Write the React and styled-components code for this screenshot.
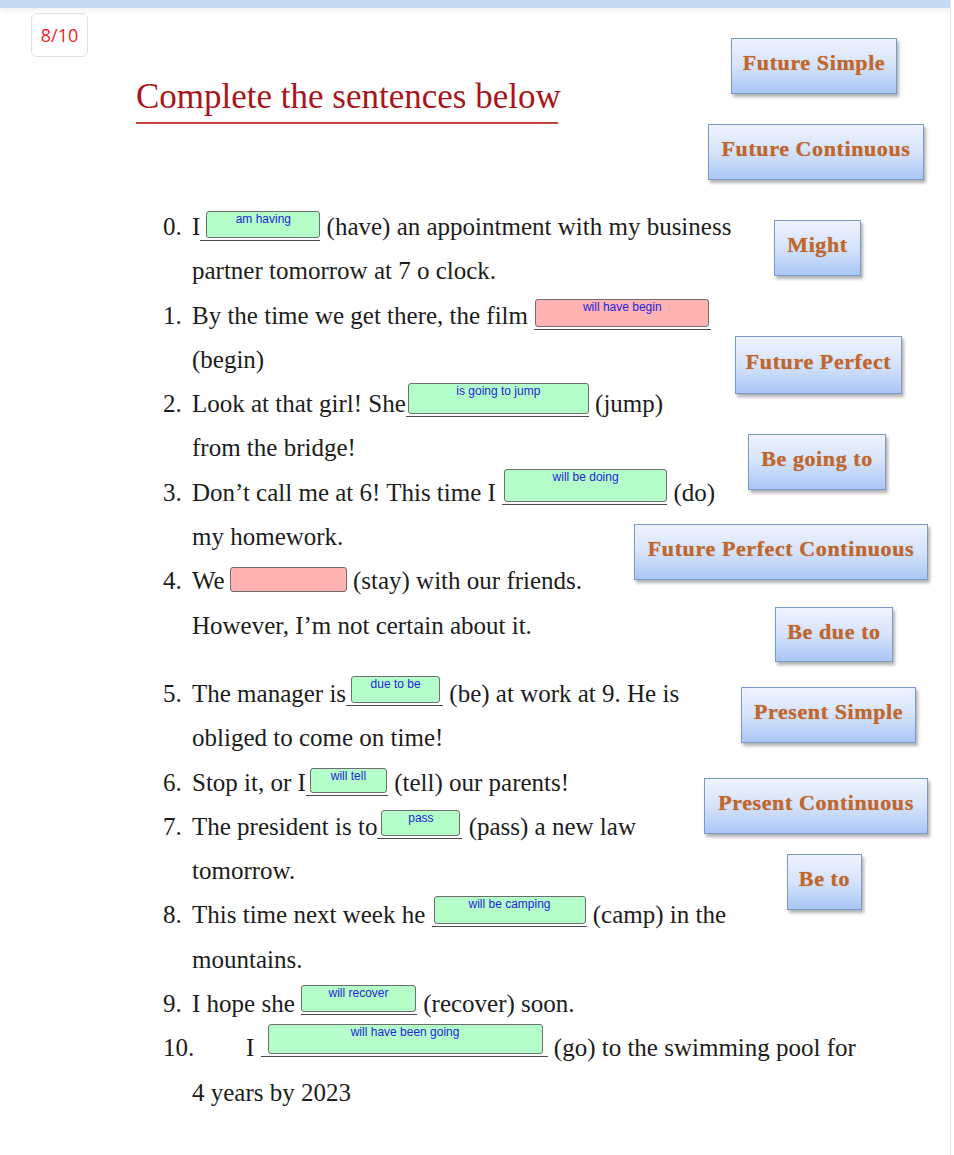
import React from "react";
import styled, { createGlobalStyle } from "styled-components";

const GlobalStyle = createGlobalStyle`
  body {
    margin: 0;
    background: #fff;
  }
`;

const Page = styled.div`
  position: relative;
  width: 950px;
  min-height: 1155px;
  border-right: 1px solid #e2e2e2;
  font-family: "Liberation Serif", "Times New Roman", serif;
  color: #1c1c1c;
  overflow: hidden;
`;

const TopBar = styled.div`
  width: 954px;
  height: 8px;
  background: #c6dbf3;
  box-shadow: 0 2px 6px rgba(0, 0, 0, 0.08);
`;

const Badge = styled.div`
  box-sizing: border-box;
  width: 57px;
  height: 44px;
  margin: 5px 0 0 31px;
  border: 1px solid #e0e0e0;
  border-radius: 6px;
  display: flex;
  align-items: center;
  justify-content: center;
  font-family: "Open Sans", "Liberation Sans", sans-serif;
  font-size: 18px;
  color: #f0202c;
`;

const Title = styled.h1`
  width: 422px;
  margin: 20px 0 0 136px;
  padding-bottom: 5px;
  border-bottom: 2px solid #c7403a;
  font-size: 35px;
  line-height: 40px;
  font-weight: normal;
  color: #a8161c;
  white-space: nowrap;
`;

const Sentences = styled.div`
  margin-top: 81px;
  padding-left: 163px;
`;

const Row = styled.div`
  display: flex;
  align-items: flex-start;
  height: 44.3px;
  line-height: 44.3px;
  font-size: 25px;
  white-space: pre;
  margin-top: ${(p) => p.$gap || 0}px;
  padding-left: ${(p) => (p.$cont ? 29 : 0)}px;
`;

const Num = styled.span`
  display: inline-block;
  width: ${(p) => p.$w || 29}px;
`;

const Blank = styled.span`
  display: flex;
  margin-top: ${(p) => p.$top}px;
  padding: 0 ${(p) => p.$pr || 0}px 2px ${(p) => p.$pl || 0}px;
  border-bottom: 1px solid ${(p) => (p.$line ? "#4a4a4a" : "transparent")};
`;

const Field = styled.span`
  box-sizing: border-box;
  display: block;
  width: ${(p) => p.$w}px;
  height: ${(p) => p.$h}px;
  padding-top: 1px;
  background: ${(p) => (p.$ok ? "#b3fec9" : "#ffb3b3")};
  border: 1px solid #6e6e6e;
  border-radius: 3px;
  font-family: "Liberation Sans", Arial, sans-serif;
  font-size: 12px;
  line-height: 13px;
  text-align: center;
  color: #2424dc;
  white-space: nowrap;
`;

const Card = styled.div`
  position: absolute;
  left: ${(p) => p.$x}px;
  top: ${(p) => p.$y}px;
  width: ${(p) => p.$w}px;
  height: ${(p) => p.$h}px;
  box-sizing: border-box;
  padding-bottom: 6px;
  display: flex;
  align-items: center;
  justify-content: center;
  border: 1px solid #7a98c8;
  background: linear-gradient(to bottom, #eef3fd 0%, #d6e3fa 50%, #a9c6f5 100%);
  box-shadow: 2px 3px 3px rgba(0, 0, 0, 0.3);
  font-size: 22px;
  font-weight: bold;
  letter-spacing: 0.6px;
  color: #c4652a;
  text-shadow: 0 0 1px rgba(120, 60, 10, 0.45);
  white-space: nowrap;
`;

const cards = [
  ["Future Simple", 731, 38, 166, 56],
  ["Future Continuous", 708, 124, 216, 56],
  ["Might", 774, 220, 87, 56],
  ["Future Perfect", 735, 336, 167, 58],
  ["Be going to", 748, 434, 138, 56],
  ["Future Perfect Continuous", 634, 524, 294, 56],
  ["Be due to", 775, 607, 118, 55],
  ["Present Simple", 741, 687, 175, 56],
  ["Present Continuous", 704, 778, 224, 56],
  ["Be to", 787, 854, 75, 56],
];

const Gap = ({ text, ok = true, w, h, top, pl, pr, line = true }) => (
  <Blank $top={top} $pl={pl} $pr={pr} $line={line}>
    <Field $ok={ok} $w={w} $h={h}>
      {text}
    </Field>
  </Blank>
);

const App = () => {
  return (
    <Page>
      <GlobalStyle />
      <TopBar />
      <Badge>8/10</Badge>
      <Title>Complete the sentences below</Title>

      <Sentences>
        <Row>
          <Num>0.</Num>I
          <Gap text="am having" w={114} h={27} top={6} pl={6} />
          {" (have) an appointment with my business"}
        </Row>
        <Row $cont>partner tomorrow at 7 o clock.</Row>

        <Row>
          <Num>1.</Num>
          {"By the time we get there, the film "}
          <Gap text="will have begin" ok={false} w={174} h={28} top={5} pl={1} pr={2} />
        </Row>
        <Row $cont>(begin)</Row>

        <Row>
          <Num>2.</Num>
          {"Look at that girl! She"}
          <Gap text="is going to jump" w={181} h={31} top={1} pl={2} />
          {" (jump)"}
        </Row>
        <Row $cont>from the bridge!</Row>

        <Row>
          <Num>3.</Num>
          {"Don’t call me at 6! This time I "}
          <Gap text="will be doing" w={163} h={33} top={-2} pl={2} />
          {" (do)"}
        </Row>
        <Row $cont>my homework.</Row>

        <Row>
          <Num>4.</Num>
          {"We"}
          <Gap text="" ok={false} w={117} h={25} top={8} pl={5} line={false} />
          {" (stay) with our friends."}
        </Row>
        <Row $cont>However, I’m not certain about it.</Row>

        <Row $gap={24}>
          <Num>5.</Num>
          {"The manager is"}
          <Gap text="due to be" w={89} h={27} top={4} pl={5} pr={3} />
          {" (be) at work at 9. He is"}
        </Row>
        <Row $cont>obliged to come on time!</Row>

        <Row>
          <Num>6.</Num>
          {"Stop it, or I"}
          <Gap text="will tell" w={77} h={25} top={7} pl={4} pr={1} />
          {" (tell) our parents!"}
        </Row>
        <Row>
          <Num>7.</Num>
          {"The president is to"}
          <Gap text="pass" w={79} h={26} top={5} pl={4} pr={2} />
          {" (pass) a new law"}
        </Row>
        <Row $cont>tomorrow.</Row>

        <Row>
          <Num>8.</Num>
          {"This time next week he "}
          <Gap text="will be camping" w={152} h={28} top={3} pl={2} pr={1} />
          {" (camp) in the"}
        </Row>
        <Row $cont>mountains.</Row>

        <Row>
          <Num>9.</Num>
          {"I hope she "}
          <Gap text="will recover" w={115} h={27} top={3} pr={1} />
          {" (recover) soon."}
        </Row>
        <Row>
          <Num $w={83}>10.</Num>
          {"I "}
          <Gap text="will have been going" w={275} h={30} top={-2} pl={7} pr={5} />
          {" (go) to the swimming pool for"}
        </Row>
        <Row $cont>4 years by 2023</Row>
      </Sentences>

      {cards.map(([label, x, y, w, h]) => (
        <Card key={label} $x={x} $y={y} $w={w} $h={h}>
          {label}
        </Card>
      ))}
    </Page>
  );
};

export default App;
